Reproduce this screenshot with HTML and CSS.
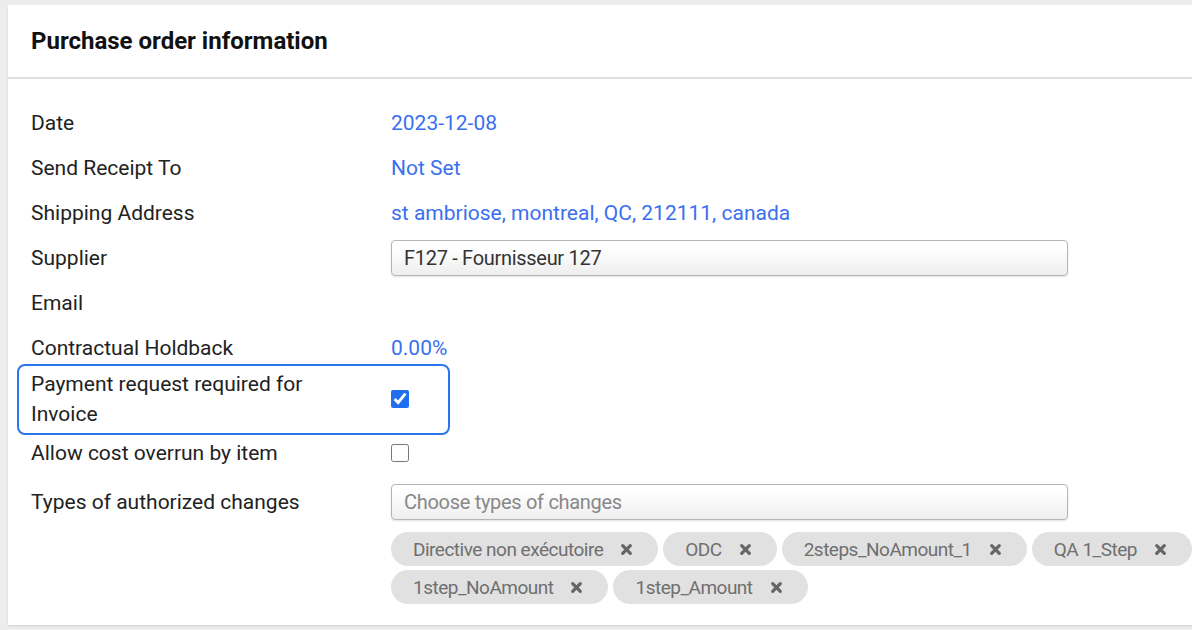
FILE: index.html
```html
<!DOCTYPE html>
<html>
<head>
  <title>Purchase order information</title>
  <link rel="stylesheet" href="styles.css">
</head>
<body>
  <div class="panel">
    <div class="panel-header">
      <h2>Purchase order information</h2>
    </div>

    <div class="panel-body">
      <div class="field">
        <div class="label">Date</div>
        <div class="value link">2023-12-08</div>
      </div>
      <div class="field">
        <div class="label">Send Receipt To</div>
        <div class="value link">Not Set</div>
      </div>
      <div class="field">
        <div class="label">Shipping Address</div>
        <div class="value link">st ambriose, montreal, QC, 212111, canada</div>
      </div>
      <div class="field">
        <div class="label">Supplier</div>
        <div class="value"><div class="select">F127 - Fournisseur 127</div></div>
      </div>
      <div class="field">
        <div class="label">Email</div>
        <div class="value"></div>
      </div>
      <div class="field">
        <div class="label">Contractual Holdback</div>
        <div class="value link">0.00%</div>
      </div>
      <div class="field field-focus">
        <div class="label">Payment request required for Invoice</div>
        <div class="value"><input type="checkbox" checked></div>
      </div>
      <div class="field">
        <div class="label">Allow cost overrun by item</div>
        <div class="value"><input type="checkbox"></div>
      </div>
      <div class="field field-multi">
        <div class="label">Types of authorized changes</div>
        <div class="value"><div class="select placeholder">Choose types of changes</div></div>
      </div>

      <div class="tags">
        <span class="tag">Directive non exécutoire <svg class="remove" viewBox="0 0 12 12"><path d="M2.5 2.5l7 7M9.5 2.5l-7 7"/></svg></span>
        <span class="tag">ODC <svg class="remove" viewBox="0 0 12 12"><path d="M2.5 2.5l7 7M9.5 2.5l-7 7"/></svg></span>
        <span class="tag">2steps_NoAmount_1 <svg class="remove" viewBox="0 0 12 12"><path d="M2.5 2.5l7 7M9.5 2.5l-7 7"/></svg></span>
        <span class="tag">QA 1_Step <svg class="remove" viewBox="0 0 12 12"><path d="M2.5 2.5l7 7M9.5 2.5l-7 7"/></svg></span>
        <span class="tag">1step_NoAmount <svg class="remove" viewBox="0 0 12 12"><path d="M2.5 2.5l7 7M9.5 2.5l-7 7"/></svg></span>
        <span class="tag">1step_Amount <svg class="remove" viewBox="0 0 12 12"><path d="M2.5 2.5l7 7M9.5 2.5l-7 7"/></svg></span>
      </div>
    </div>
  </div>
</body>
</html>
```

FILE: styles.css
```css
html, body {
  margin: 0;
  height: 100%;
  overflow: hidden;
}
body {
  background-color: #ededed;
  font-family: Roboto, "Liberation Sans", sans-serif;
  color: #222;
  padding: 5px 0 0 8px;
  box-sizing: border-box;
}
.panel {
  background-color: #fff;
  margin-right: -40px;
  height: 620px;
  box-shadow: 0 1px 2px rgba(0, 0, 0, 0.12);
}
.panel-header {
  height: 72px;
  display: flex;
  align-items: center;
  padding: 0 23px;
  border-bottom: 2px solid #e0e0e0;
}
.panel-header h2 {
  margin: 0;
  font-size: 24px;
  font-weight: 700;
  color: #111;
}
.panel-body {
  padding: 21px 23px 0;
}
.field {
  display: grid;
  grid-template-columns: 360px 1fr;
  align-items: center;
  min-height: 45px;
  font-size: 21px;
  line-height: 30px;
}
.label {
  max-width: 300px;
}
.link {
  color: #3a6ff0;
}
.field-focus {
  width: 433px;
  box-sizing: border-box;
  margin: -6px 0 -5px -14px;
  padding: 3px 0 4px 12px;
  border: 2px solid #2a76f0;
  border-radius: 8px;
  min-height: 0;
}
.field-multi {
  margin-top: 4px;
}
input[type="checkbox"] {
  width: 18px;
  height: 18px;
  margin: 0;
  accent-color: #1f6ff0;
  display: block;
}
.select {
  width: 677px;
  height: 36px;
  box-sizing: border-box;
  border: 1px solid #b5b5b5;
  border-radius: 4px;
  background: linear-gradient(#fff 20%, #eee 100%);
  box-shadow: 0 1px 2px rgba(0, 0, 0, 0.12);
  padding: 0 12px;
  font-size: 20px;
  line-height: 34px;
  color: #333;
  letter-spacing: -0.3px;
}
.placeholder {
  color: #888;
}
.tags {
  display: flex;
  flex-wrap: wrap;
  gap: 4px 5px;
  margin: 8px 0 0 360px;
}
.tag {
  display: inline-flex;
  align-items: center;
  height: 34px;
  padding: 0 25px 0 22px;
  border-radius: 17px;
  background-color: #e1e1e1;
  color: #6f6f6f;
  font-size: 19px;
  letter-spacing: -0.5px;
}
.remove {
  width: 13px;
  height: 13px;
  margin-left: 17px;
  fill: none;
  stroke: #666;
  stroke-width: 3;
  stroke-linecap: round;
}
```
